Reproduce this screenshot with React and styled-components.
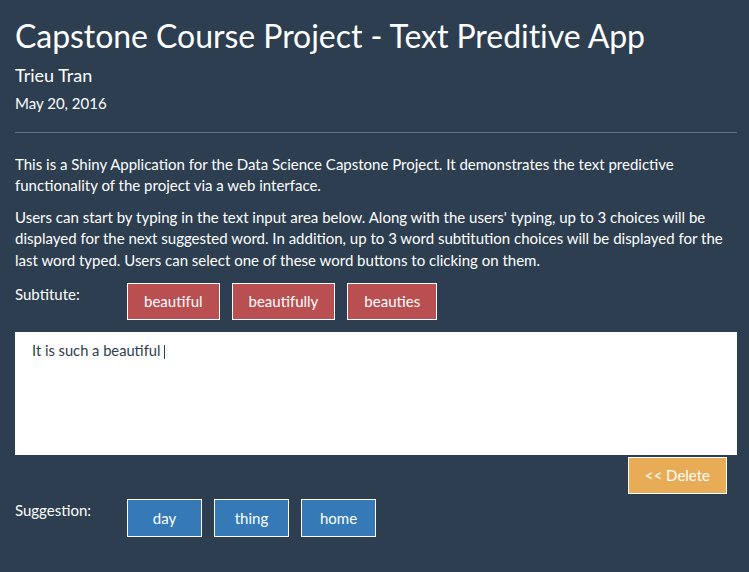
import React from "react";
import styled, { createGlobalStyle } from "styled-components";

const Global = createGlobalStyle`
  html, body { margin: 0; padding: 0; }
  body {
    background: #2c3e50;
    color: #ffffff;
    font-family: Lato, "Open Sans", "Liberation Sans", sans-serif;
    font-size: 15px;
    line-height: 1.42857;
  }
  * { box-sizing: border-box; }
`;

const Page = styled.div`
  padding: 17px 12px 20px 15px;
`;

const Title = styled.h1`
  margin: 0;
  font-size: 32px;
  line-height: 38px;
  font-weight: 400;
  letter-spacing: -0.05px;
  color: #ffffff;
`;

const Author = styled.h4`
  margin: 8px 0 0;
  font-size: 18px;
  line-height: 24px;
  font-weight: 400;
`;

const DateLine = styled.h4`
  margin: 6px 0 0;
  font-size: 15px;
  line-height: 21px;
  font-weight: 400;
`;

const Divider = styled.hr`
  margin: 18px 0 0;
  border: 0;
  height: 1px;
  background: #627486;
`;

const Intro = styled.div`
  margin-top: 20.5px;
`;

const Para = styled.p`
  margin: 0 0 10.5px;
  &:last-child { margin-bottom: 0; }
`;

const Row = styled.div`
  display: flex;
  align-items: flex-start;
  margin-top: ${(p) => p.$gap}px;
`;

const Label = styled.div`
  width: 112px;
  flex: none;
  padding-top: 1px;
`;

const Buttons = styled.div`
  display: flex;
  gap: 12px;
`;

const colors = {
  red: "#b94f51",
  blue: "#3579b6",
  orange: "#e8ab56",
};

const Btn = styled.button`
  font-family: inherit;
  font-size: 15px;
  color: #ffffff;
  background: ${(p) => colors[p.$tone]};
  border: 1px solid #ffffff;
  border-radius: 0;
  height: ${(p) => p.$h || 37}px;
  padding: 0 16px;
  width: ${(p) => (p.$w ? `${p.$w}px` : "auto")};
  line-height: 1;
  cursor: pointer;
`;

const Editor = styled.div`
  margin-top: 12px;
  background: #ffffff;
  height: 123px;
  padding: 8px 17px 0;
  color: #2c3e50;
  font-size: 14.7px;
  line-height: 21.4px;
`;

const Caret = styled.span`
  display: inline-block;
  width: 1px;
  height: 14px;
  background: #2c3e50;
  margin-left: 4px;
  vertical-align: -3px;
`;

const DeleteRow = styled.div`
  display: flex;
  justify-content: flex-end;
  padding-right: 10px;
  margin-top: 2px;
`;

export default function App() {
  return (
    <>
      <Global />
      <Page>
        <Title>Capstone Course Project - Text Preditive App</Title>
        <Author>Trieu Tran</Author>
        <DateLine>May 20, 2016</DateLine>
        <Divider />
        <Intro>
          <Para>
            This is a Shiny Application for the Data Science Capstone Project. It
            demonstrates the text predictive functionality of the project via a web
            interface.
          </Para>
          <Para>
            Users can start by typing in the text input area below. Along with the
            users' typing, up to 3 choices will be displayed for the next suggested
            word. In addition, up to 3 word subtitution choices will be displayed for
            the last word typed. Users can select one of these word buttons to
            clicking on them.
          </Para>
        </Intro>
        <Row $gap={12}>
          <Label>Subtitute:</Label>
          <Buttons>
            <Btn $tone="red">beautiful</Btn>
            <Btn $tone="red">beautifully</Btn>
            <Btn $tone="red">beauties</Btn>
          </Buttons>
        </Row>
        <Editor>
          It is such a beautiful
          <Caret />
        </Editor>
        <DeleteRow>
          <Btn $tone="orange">&lt;&lt; Delete</Btn>
        </DeleteRow>
        <Row $gap={5}>
          <Label>Suggestion:</Label>
          <Buttons>
            <Btn $tone="blue" $w={75} $h={38}>day</Btn>
            <Btn $tone="blue" $w={75} $h={38}>thing</Btn>
            <Btn $tone="blue" $w={75} $h={38}>home</Btn>
          </Buttons>
        </Row>
      </Page>
    </>
  );
}
